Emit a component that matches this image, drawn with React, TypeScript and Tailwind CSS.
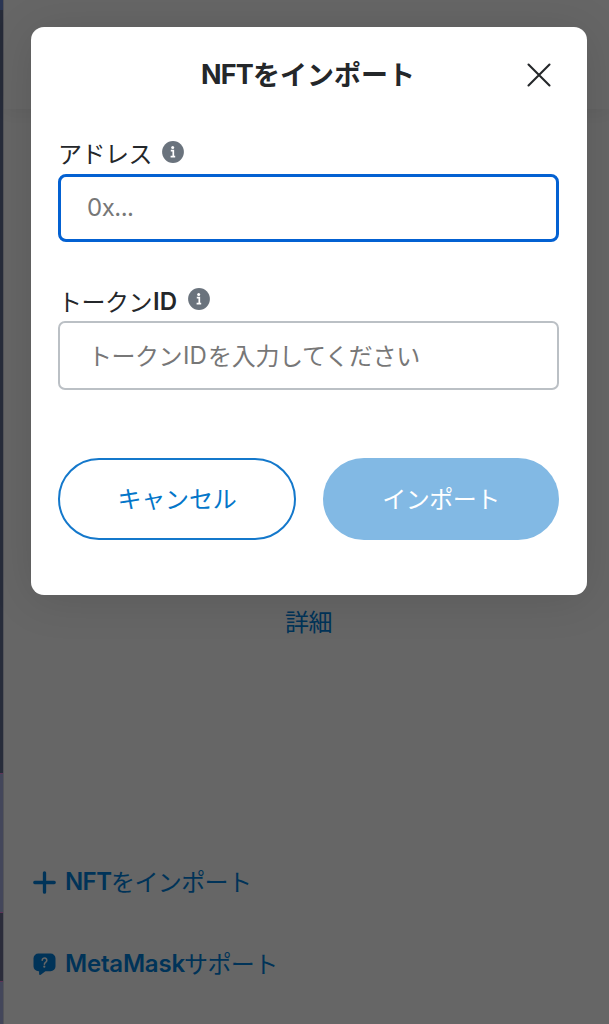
import type { ReactNode } from 'react';

function Latin({ children, className = '' }: { children: ReactNode; className?: string }) {
  return <span className={`inline-block font-[Inter] ${className}`}>{children}</span>;
}

function Kana({ children, className = 'tracking-[-0.5px]' }: { children: ReactNode; className?: string }) {
  return <span className={`inline-block -translate-y-px ${className}`}>{children}</span>;
}

function InfoIcon() {
  return (
    <svg width="22" height="22" viewBox="0 0 22 22" className="shrink-0">
      <circle cx="11" cy="11" r="10.9" fill="#6a737d" />
      <circle cx="10.7" cy="6.4" r="1.5" fill="#fff" />
      <path d="M8.8 9.700h2.500v5.800M8.600 15.700h4.600" fill="none" stroke="#fff" strokeWidth="1.7" />
    </svg>
  );
}

function CloseIcon() {
  return (
    <svg width="24" height="24" viewBox="0 0 24 24" fill="none" stroke="#24272a" strokeWidth="2.1" strokeLinecap="round">
      <path d="M1.500 1.500l21 21M22.500 1.500l-21 21" />
    </svg>
  );
}

function PlusIcon() {
  return (
    <svg width="23" height="23" viewBox="0 0 23 23" fill="none" stroke="#003358" strokeWidth="3.3" strokeLinecap="round">
      <path d="M11.500 1.800v19.400M1.800 11.500h19.400" />
    </svg>
  );
}

function SupportIcon() {
  return (
    <svg width="23" height="23" viewBox="0 0 23 23">
      <path d="M5.500.600h12a5 5 0 0 1 5 5v7.600a5 5 0 0 1-5 5h-5.100l-4.300 3.400c-.9.700-2 .2-2-.9v-2.500h-.600a5 5 0 0 1-5-5V5.600a5 5 0 0 1 5-5z" fill="#003358" />
      <path d="M9.200 7.300a2.300 2.300 0 1 1 3.600 1.900c-.9.600-1.400 1-1.400 2" fill="none" stroke="#666" strokeWidth="1.600" strokeLinecap="round" />
      <circle cx="11.300" cy="13.700" r="1.100" fill="#666" />
    </svg>
  );
}

export default function App() {
  return (
    <div className="relative flex h-[1024px] w-[609px] overflow-hidden bg-[#666666] font-['Noto_Sans_CJK_JP',sans-serif] text-[24px] leading-[34px]">
      <div className="flex w-[4px] shrink-0 flex-col border-r border-[#54555a]">
        <div className="h-[10px] bg-[#2b3654]" />
        <div className="h-[763px] bg-[#272c3a]" />
        <div className="h-[139px] border-t border-[#5f3557] bg-[#43465a]" />
        <div className="h-[69px] border-t border-[#5f3557] bg-[#2b2c3a]" />
        <div className="grow border-t border-[#5f3557] bg-[#43465a]" />
      </div>

      <div className="flex grow flex-col">
        <header className="h-[109px] shrink-0 shadow-[0_2px_16px_rgba(0,0,0,0.06)]" />
        <main className="flex grow flex-col pt-[496px] text-[#003358]">
          <a className="self-center pl-1"><Kana>詳細</Kana></a>
          <div className="mt-[226px] flex items-center pl-[29px]">
            <PlusIcon />
            <Latin className="ml-[9px] w-[46px] font-semibold tracking-[-0.6px]">NFT</Latin>
            <Kana className="tracking-[-0.6px]">をインポート</Kana>
          </div>
          <div className="mt-[48px] flex items-center pl-[29px]">
            <SupportIcon />
            <Latin className="ml-[9px] w-[119px] font-semibold tracking-[-0.2px]">MetaMask</Latin>
            <Kana className="tracking-[-0.6px]">サポート</Kana>
          </div>
        </main>
      </div>

      <section className="absolute left-[31px] top-[27px] flex h-[568px] w-[556px] flex-col rounded-[13px] bg-white px-[27px] text-[#24272a] shadow-[0_4px_46px_rgba(0,0,0,0.12)]">
        <div className="flex h-[96px] shrink-0 items-center">
          <h1 className="ml-[143px] flex items-center text-[27px] font-bold">
            <Latin className="w-[52px] tracking-[-0.8px]">NFT</Latin>
            <Kana className="tracking-normal">をインポート</Kana>
          </h1>
          <button className="ml-auto mr-[9px]"><CloseIcon /></button>
        </div>

        <div className="flex h-[51px] shrink-0 items-start gap-[10px] pt-[13px]">
          <label className="pt-[1px]"><Kana>アドレス</Kana></label>
          <div className="pt-[5px]"><InfoIcon /></div>
        </div>
        <div className="flex h-[68px] w-[501px] shrink-0 items-center rounded-[8px] border-[3px] border-[#0361d2] pl-[26px] text-[#777]">
          <Latin className="tracking-[-0.5px]">0x...</Latin>
        </div>

        <div className="mt-[29px] flex h-[50px] shrink-0 items-start gap-[9px] pt-[13px]">
          <label className="flex pt-[1px]">
            <Kana>トークン</Kana>
            <Latin className="w-[27px] pl-px font-semibold">ID</Latin>
          </label>
          <div className="pt-[4px]"><InfoIcon /></div>
        </div>
        <div className="flex h-[69px] w-[501px] shrink-0 items-center rounded-[7px] border-2 border-[#bbc0c5] pl-[28px] text-[#777]">
          <Kana>トークン</Kana>
          <Latin className="w-[26px] pl-px">ID</Latin>
          <Kana className="tracking-[-0.3px]">を入力してください</Kana>
        </div>

        <div className="mt-[68px] flex gap-[27px]">
          <button className="h-[82px] w-[238px] rounded-full border-2 border-[#1478cb] text-[#0376c9]"><Kana className="tracking-[-0.2px]">キャンセル</Kana></button>
          <button className="h-[82px] w-[236px] rounded-full bg-[#82b9e4] text-white"><Kana>インポート</Kana></button>
        </div>
      </section>
    </div>
  );
}
